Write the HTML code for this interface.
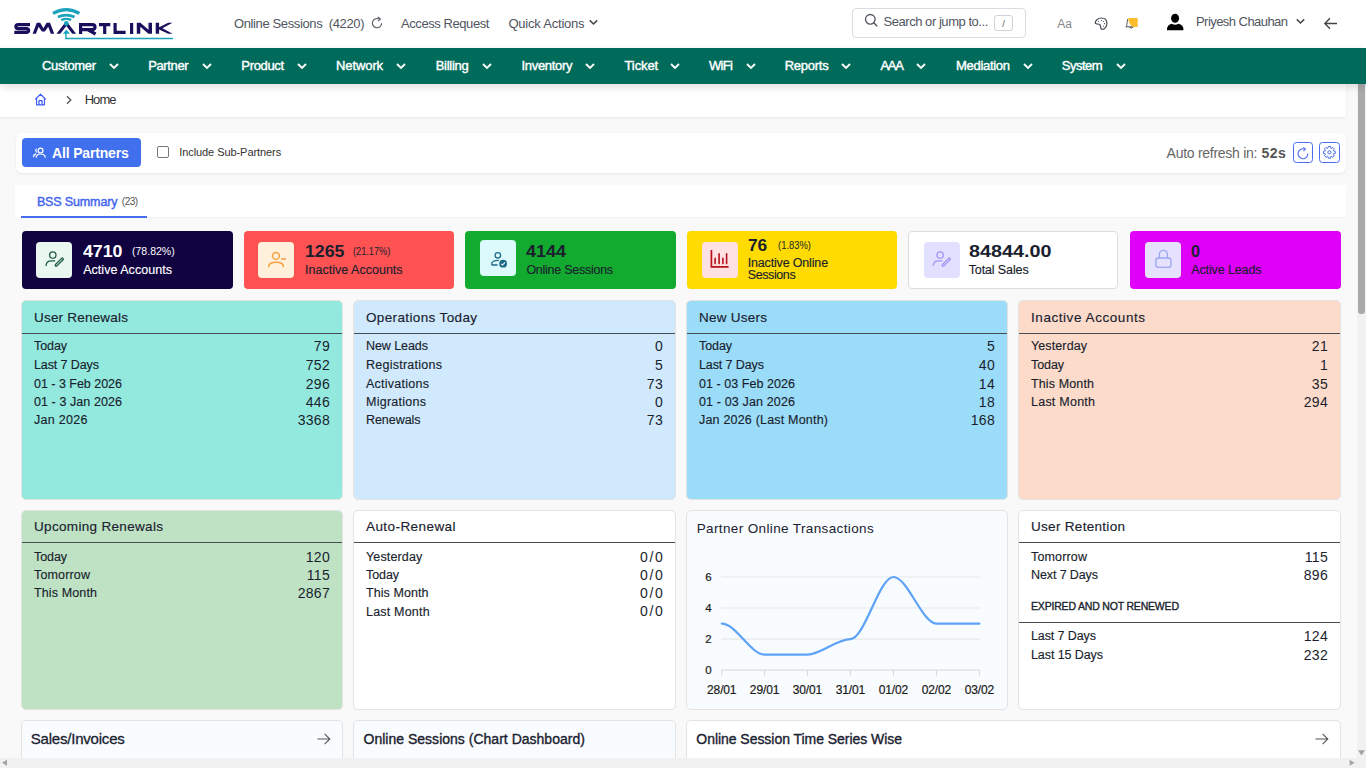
<!DOCTYPE html>
<html><head><meta charset="utf-8">
<style>
*{box-sizing:border-box;margin:0;padding:0}
html,body{width:1366px;height:768px;overflow:hidden;background:#f9f9f9;font-family:"Liberation Sans",sans-serif;color:#222}
.a{position:absolute;white-space:nowrap}
.p{position:absolute;border-radius:5px;border:1px solid #e6e6e6}
.dv{position:absolute;height:1.5px;background:#4a5258}
</style></head>
<body>

<div class="a" style="left:0;top:0;width:1366px;height:48px;background:#fff"></div>
<svg class="a" style="left:0;top:0" width="190" height="48" viewBox="0 0 190 48">
    <g fill="none" stroke="#1a0f5c" stroke-width="3.2" stroke-linejoin="miter" stroke-linecap="butt">
      <path d="M30 24.6 H18.2 Q15.9 24.6 15.9 26.6 Q15.9 28.6 18.2 28.6 H26.3 Q28.6 28.6 28.6 30.6 Q28.6 32.4 26.3 32.4 H14.3"/>
      <path d="M80.6 34 V24.6 H92.4 Q95 24.6 95 27.1 Q95 29.6 92.4 29.6 H82 M87.5 29.6 L95.6 34"/>
      <path d="M99 24.6 H110.3 M104.7 24.6 V34"/>
      <path d="M115.1 23 V32.4 H125.6"/>
      <path d="M131.6 23 V34"/>
    </g>
    <g fill="none" stroke="#1aa3bb" stroke-linecap="butt">
      <path d="M53 13.4 Q66.2 5.9 79.4 13.4" stroke-width="3.3"/>
      <path d="M57.9 17.1 Q66.2 13.1 74.5 17.1" stroke-width="2.8"/>
      <path d="M61.3 20.1 Q66.2 17.7 71.1 20.1" stroke-width="2.4"/>
      <path d="M65.9 31 V38.5 H173" stroke-width="1.4"/>
    </g>
    <g fill="#1a0f5c">
      <path d="M32.6 33.8 L36.8 22.8 H40.2 L43.4 28.2 L46.6 22.8 H50 L54.2 33.8 H50.8 L48.2 26.8 L44.9 31.4 H41.9 L38.6 26.8 L36 33.8 Z"/>
      <path d="M56.5 33.8 L64.6 23.2 H68 L76.1 33.8 H72.3 L66.3 25.9 L60.3 33.8 Z"/>
      <path d="M136.8 33.8 V22.8 H140.4 L148.5 29.8 V22.8 H152 V33.8 H148.5 L140.3 26.8 V33.8 Z"/>
      <path d="M155.7 33.8 V22.8 H159.1 V27.2 L168.2 22.8 H172.5 L162.4 28.3 L172.6 33.8 H168.2 L159.1 29.4 V33.8 Z"/>
    </g>
    <circle cx="66.3" cy="23.4" r="2.4" fill="#1aa3bb"/>
    <path d="M62.9 33.8 L66.4 29.6 L70 33.8 Z" fill="#1aa3bb"/>
  </svg>
<div class="a" style="left:234.00px;top:17.00px;font-size:13px;line-height:13px;color:#50555e;letter-spacing:-0.375px;">Online Sessions&nbsp; (4220)</div>
<svg class="a" style="left:370px;top:16px" width="14" height="14" viewBox="0 0 14 14"><path d="M11.6 7.2 A4.6 4.6 0 1 1 8.8 2.9" fill="none" stroke="#50555e" stroke-width="1.1"/><path d="M7.8 1 L10.4 3 L8 5.2" fill="none" stroke="#50555e" stroke-width="1.1"/></svg>
<div class="a" style="left:401.00px;top:17.00px;font-size:13px;line-height:13px;color:#50555e;letter-spacing:-0.426px;">Access Request</div>
<div class="a" style="left:508.40px;top:17.00px;font-size:13px;line-height:13px;color:#50555e;letter-spacing:-0.213px;">Quick Actions</div>
<svg class="a" style="left:588px;top:18px" width="11" height="9" viewBox="0 0 11 9"><path d="M1.8 2.4 L5.5 6 L9.2 2.4" fill="none" stroke="#444" stroke-width="1.5"/></svg>
<div class="a" style="left:852px;top:8px;width:174px;height:30px;border:1px solid #d8dde4;border-radius:4px;background:#fff"></div>
<svg class="a" style="left:864px;top:13px" width="15" height="15" viewBox="0 0 15 15"><circle cx="6.3" cy="6.3" r="4.8" fill="none" stroke="#50555e" stroke-width="1.3"/><path d="M9.8 9.8 L13.2 13.2" stroke="#50555e" stroke-width="1.4"/></svg>
<div class="a" style="left:883.50px;top:15.00px;font-size:13px;line-height:13px;color:#50555e;letter-spacing:-0.455px;">Search or jump to...</div>
<div class="a" style="left:994px;top:15px;width:19px;height:16px;border:1px solid #cfd3d8;border-radius:3px"></div>
<div class="a" style="left:1002.20px;top:20.00px;font-size:9px;line-height:9px;color:#555;">/</div>
<div class="a" style="left:1057.30px;top:18.00px;font-size:12px;line-height:12px;color:#888;letter-spacing:-0.078px;">Aa</div>
<svg class="a" style="left:1090px;top:12px" width="20" height="22" viewBox="0 0 20 22"><path d="M5.2 11 C5.4 8.4 8 6 11.3 6 C14.6 6 16.9 8.2 16.9 11.6 C16.9 14.6 14.6 17.3 12.4 17.3 C11 17.3 10.6 16.4 10.5 14.2 C10.4 12.6 9 12.1 7.8 12 C6.2 11.9 5.2 11.6 5.2 11 Z" fill="none" stroke="#454b52" stroke-width="1.2" stroke-linejoin="round"/><circle cx="8.5" cy="9.3" r=".6" fill="#454b52"/><circle cx="11.5" cy="8.3" r=".6" fill="#454b52"/><circle cx="13.5" cy="9.5" r=".6" fill="#454b52"/><circle cx="14.5" cy="11.7" r=".6" fill="#454b52"/><circle cx="13.5" cy="14.1" r=".6" fill="#454b52"/></svg>
<svg class="a" style="left:1120px;top:12px" width="22" height="22" viewBox="0 0 22 22"><path d="M7.6 7 C7.4 9 7 12 6.4 14.6 L5.8 14.8 H14.2" fill="none" stroke="#50555e" stroke-width="1"/><path d="M9.4 15 Q11.2 17.4 13 15" fill="none" stroke="#50555e" stroke-width="1"/><path d="M8.2 6 H17.7 V15.1 H13.6 C10.8 14.2 8.6 11 8.2 6 Z" fill="#fbbd2c"/></svg>
<svg class="a" style="left:1166px;top:13px" width="19" height="19" viewBox="0 0 19 19"><ellipse cx="9.1" cy="5.2" rx="4" ry="4.5" fill="#000"/><path d="M0.9 16.4 Q1 12 5.8 10.7 Q9.1 12.6 12.4 10.7 Q17.4 12 17.5 16.4 Q17.5 17.3 16.4 17.3 H2 Q0.9 17.3 0.9 16.4 Z" fill="#000"/></svg>
<div class="a" style="left:1196.00px;top:15.00px;font-size:13px;line-height:13px;color:#50555e;letter-spacing:-0.552px;">Priyesh Chauhan</div>
<svg class="a" style="left:1295px;top:17px" width="11" height="9" viewBox="0 0 11 9"><path d="M1.8 2.4 L5.5 6 L9.2 2.4" fill="none" stroke="#444" stroke-width="1.5"/></svg>
<svg class="a" style="left:1323px;top:17px" width="15" height="13" viewBox="0 0 15 13"><path d="M14 6.5 H2 M7 1.3 L1.8 6.5 L7 11.7" fill="none" stroke="#444" stroke-width="1.4"/></svg>
<div class="a" style="left:0;top:48px;width:1366px;height:36px;background:#006a5b;z-index:3;box-shadow:0 3px 8px rgba(0,0,0,.13)"></div>
<div class="a" style="left:0;top:0;z-index:4">
<div class="a" style="left:42.00px;top:59.00px;font-size:13px;line-height:13px;color:#fff;letter-spacing:-0.336px;-webkit-text-stroke:0.4px #fff;">Customer</div>
<svg class="a" style="left:108.5px;top:62.6px" width="10" height="7" viewBox="0 0 10 7"><path d="M1 1 L5 5 L9 1" fill="none" stroke="#fff" stroke-width="1.8"/></svg>
<div class="a" style="left:148.20px;top:59.00px;font-size:13px;line-height:13px;color:#fff;letter-spacing:-0.372px;-webkit-text-stroke:0.4px #fff;">Partner</div>
<svg class="a" style="left:201.9px;top:62.6px" width="10" height="7" viewBox="0 0 10 7"><path d="M1 1 L5 5 L9 1" fill="none" stroke="#fff" stroke-width="1.8"/></svg>
<div class="a" style="left:241.30px;top:59.00px;font-size:13px;line-height:13px;color:#fff;letter-spacing:-0.334px;-webkit-text-stroke:0.4px #fff;">Product</div>
<svg class="a" style="left:296.5px;top:62.6px" width="10" height="7" viewBox="0 0 10 7"><path d="M1 1 L5 5 L9 1" fill="none" stroke="#fff" stroke-width="1.8"/></svg>
<div class="a" style="left:336.10px;top:59.00px;font-size:13px;line-height:13px;color:#fff;letter-spacing:-0.113px;-webkit-text-stroke:0.4px #fff;">Network</div>
<svg class="a" style="left:396.2px;top:62.6px" width="10" height="7" viewBox="0 0 10 7"><path d="M1 1 L5 5 L9 1" fill="none" stroke="#fff" stroke-width="1.8"/></svg>
<div class="a" style="left:435.70px;top:59.00px;font-size:13px;line-height:13px;color:#fff;letter-spacing:-0.281px;-webkit-text-stroke:0.4px #fff;">Billing</div>
<svg class="a" style="left:482.0px;top:62.6px" width="10" height="7" viewBox="0 0 10 7"><path d="M1 1 L5 5 L9 1" fill="none" stroke="#fff" stroke-width="1.8"/></svg>
<div class="a" style="left:521.50px;top:59.00px;font-size:13px;line-height:13px;color:#fff;letter-spacing:-0.309px;-webkit-text-stroke:0.4px #fff;">Inventory</div>
<svg class="a" style="left:584.5px;top:62.6px" width="10" height="7" viewBox="0 0 10 7"><path d="M1 1 L5 5 L9 1" fill="none" stroke="#fff" stroke-width="1.8"/></svg>
<div class="a" style="left:624.50px;top:59.00px;font-size:13px;line-height:13px;color:#fff;letter-spacing:-0.098px;-webkit-text-stroke:0.4px #fff;">Ticket</div>
<svg class="a" style="left:670.3px;top:62.6px" width="10" height="7" viewBox="0 0 10 7"><path d="M1 1 L5 5 L9 1" fill="none" stroke="#fff" stroke-width="1.8"/></svg>
<div class="a" style="left:709.00px;top:59.00px;font-size:13px;line-height:13px;color:#fff;letter-spacing:-0.663px;-webkit-text-stroke:0.4px #fff;">WiFi</div>
<svg class="a" style="left:745.5px;top:62.6px" width="10" height="7" viewBox="0 0 10 7"><path d="M1 1 L5 5 L9 1" fill="none" stroke="#fff" stroke-width="1.8"/></svg>
<div class="a" style="left:784.70px;top:59.00px;font-size:13px;line-height:13px;color:#fff;letter-spacing:-0.253px;-webkit-text-stroke:0.4px #fff;">Reports</div>
<svg class="a" style="left:841.2px;top:62.6px" width="10" height="7" viewBox="0 0 10 7"><path d="M1 1 L5 5 L9 1" fill="none" stroke="#fff" stroke-width="1.8"/></svg>
<div class="a" style="left:880.40px;top:59.00px;font-size:13px;line-height:13px;color:#fff;letter-spacing:-1.257px;-webkit-text-stroke:0.4px #fff;">AAA</div>
<svg class="a" style="left:916.0px;top:62.6px" width="10" height="7" viewBox="0 0 10 7"><path d="M1 1 L5 5 L9 1" fill="none" stroke="#fff" stroke-width="1.8"/></svg>
<div class="a" style="left:956.00px;top:59.00px;font-size:13px;line-height:13px;color:#fff;letter-spacing:-0.296px;-webkit-text-stroke:0.4px #fff;">Mediation</div>
<svg class="a" style="left:1022.5px;top:62.6px" width="10" height="7" viewBox="0 0 10 7"><path d="M1 1 L5 5 L9 1" fill="none" stroke="#fff" stroke-width="1.8"/></svg>
<div class="a" style="left:1061.70px;top:59.00px;font-size:13px;line-height:13px;color:#fff;letter-spacing:-0.469px;-webkit-text-stroke:0.4px #fff;">System</div>
<svg class="a" style="left:1115.5px;top:62.6px" width="10" height="7" viewBox="0 0 10 7"><path d="M1 1 L5 5 L9 1" fill="none" stroke="#fff" stroke-width="1.8"/></svg>
</div>
<div class="a" style="left:0;top:84px;width:1346px;height:33px;background:#fff;box-shadow:0 1px 2px rgba(0,0,0,.07)"></div>
<svg class="a" style="left:34px;top:93px" width="13" height="13" viewBox="0 0 13 13"><path d="M1.2 6.4 L6.5 1.2 L11.8 6.4 M2.6 5.2 V11.8 H10.4 V5.2 M5 11.8 V7.6 H8 V11.8" fill="none" stroke="#3d5cf5" stroke-width="1.2" stroke-linejoin="round"/></svg>
<svg class="a" style="left:65px;top:95px" width="8" height="10" viewBox="0 0 8 10"><path d="M2 1.2 L5.8 5 L2 8.8" fill="none" stroke="#555" stroke-width="1.3"/></svg>
<div class="a" style="left:84.70px;top:93.00px;font-size:13px;line-height:13px;color:#333;letter-spacing:-0.960px;">Home</div>
<div class="a" style="left:16px;top:132.5px;width:1330px;height:40.5px;background:#fff;border-radius:6px;box-shadow:0 1px 3px rgba(0,0,0,.07)"></div>
<div class="a" style="left:22px;top:137.5px;width:118.5px;height:29.7px;background:#4170ee;border-radius:4px"></div>
<svg class="a" style="left:32px;top:147px" width="16" height="12" viewBox="0 0 16 12"><circle cx="8.6" cy="3.6" r="2.4" fill="none" stroke="#fff" stroke-width="1.2"/><path d="M4.2 10.6 Q4.4 7 8.6 7 Q12.8 7 13.4 10.6" fill="none" stroke="#fff" stroke-width="1.2"/><path d="M5.4 5.4 A2 2 0 0 1 4.6 1.8 M1.4 10.2 Q1.6 7.4 4 6.8" fill="none" stroke="#fff" stroke-width="1.2"/></svg>
<div class="a" style="left:52.00px;top:146.00px;font-size:14px;line-height:14px;color:#fff;font-weight:bold;letter-spacing:-0.162px;">All Partners</div>
<div class="a" style="left:156.7px;top:146.1px;width:12px;height:12px;border:1.3px solid #777;border-radius:2px;background:#fff"></div>
<div class="a" style="left:179.20px;top:147.00px;font-size:11px;line-height:11px;color:#333;letter-spacing:-0.070px;">Include Sub-Partners</div>
<div class="a" style="left:1166.60px;top:146.00px;font-size:14px;line-height:14px;color:#666;letter-spacing:-0.276px;">Auto refresh in:</div>
<div class="a" style="left:1261.50px;top:146.00px;font-size:14px;line-height:14px;color:#555;font-weight:bold;letter-spacing:0.420px;">52s</div>
<div class="a" style="left:1292.6px;top:142px;width:20.4px;height:20.8px;border:1px solid #4a6cf0;border-radius:3.5px;background:#fff"></div>
<svg class="a" style="left:1292.6px;top:142px" width="21" height="21" viewBox="0 0 21 21"><path d="M14.9 11.6 A4.95 4.95 0 1 1 11.6 7.1" fill="none" stroke="#4a6cf0" stroke-width="1.1"/><path d="M10.3 5.3 L12.4 7.1 L10.5 9" fill="none" stroke="#4a6cf0" stroke-width="1.1"/></svg>
<div class="a" style="left:1319px;top:142px;width:21px;height:20.8px;border:1px solid #4a6cf0;border-radius:3.5px;background:#fff"></div>
<svg class="a" style="left:1319.2px;top:142.4px" width="21" height="21" viewBox="0 0 21 21"><path d="M8.89 6.33 L9.38 4.44 L11.42 4.44 L11.91 6.33 L12.17 6.43 L13.86 5.45 L15.30 6.89 L14.32 8.58 L14.42 8.84 L16.31 9.33 L16.31 11.37 L14.42 11.86 L14.32 12.12 L15.30 13.81 L13.86 15.25 L12.17 14.27 L11.91 14.37 L11.42 16.26 L9.38 16.26 L8.89 14.37 L8.63 14.27 L6.94 15.25 L5.50 13.81 L6.48 12.12 L6.38 11.86 L4.49 11.37 L4.49 9.33 L6.38 8.84 L6.48 8.58 L5.50 6.89 L6.94 5.45 L8.63 6.43 Z" fill="none" stroke="#4a6cf0" stroke-width="1" stroke-linejoin="round"/><circle cx="10.4" cy="10.35" r="1.6" fill="none" stroke="#4a6cf0" stroke-width="1"/></svg>
<div class="a" style="left:15px;top:185.3px;width:1331px;height:31.9px;background:#fff"></div>
<div class="a" style="left:36.90px;top:196.00px;font-size:12.5px;line-height:12.5px;color:#4466ee;letter-spacing:-0.137px;-webkit-text-stroke:0.45px #4466ee;">BSS Summary</div>
<div class="a" style="left:121.80px;top:197.00px;font-size:10px;line-height:10px;color:#555;letter-spacing:-0.461px;">(23)</div>
<div class="a" style="left:147px;top:217px;width:1199px;height:1px;background:#efefef"></div>
<div class="a" style="left:21px;top:215.8px;width:126px;height:2.2px;background:#4a6cf0"></div>
<div class="a" style="left:22px;top:231px;width:210.5px;height:58px;background:#10033f;border-radius:4px;"></div>
<div class="a" style="left:36.2px;top:242px;width:36px;height:36px;background:#e9f7ef;border-radius:4px"></div>
<svg class="a" style="left:36.2px;top:242px" width="36" height="36" viewBox="0 0 36 36"><circle cx="16.8" cy="13.1" r="3.2" fill="none" stroke="#1f5a45" stroke-width="1.3"/><path d="M10.1 23.5 Q10.3 18.9 15.5 18.9 H18.6" fill="none" stroke="#1f5a45" stroke-width="1.3" stroke-linecap="round"/><path d="M20.2 23.2 L26.3 17.1" stroke="#1f5a45" stroke-width="3.3" stroke-linecap="round"/><path d="M20.4 23 L26.1 17.3" stroke="#e9f7ef" stroke-width="1" stroke-linecap="round"/></svg>
<div class="a" style="left:83.20px;top:243.00px;font-size:17px;line-height:17px;color:#fff;font-weight:bold;transform:scaleX(1.0444);transform-origin:0 0;">4710</div>
<div class="a" style="left:131.50px;top:246.00px;font-size:11px;line-height:11px;color:#fff;transform:scaleX(0.9566);transform-origin:0 0;">(78.82%)</div>
<div class="a" style="left:83.20px;top:264.00px;font-size:12.5px;line-height:12.5px;color:#fff;letter-spacing:0.033px;-webkit-text-stroke:0.15px #fff;">Active Accounts</div>
<div class="a" style="left:243.8px;top:231px;width:210.5px;height:58px;background:#ff5252;border-radius:4px;"></div>
<div class="a" style="left:258.1px;top:242px;width:36px;height:36px;background:#fff0dc;border-radius:4px"></div>
<svg class="a" style="left:258.1px;top:242px" width="36" height="36" viewBox="0 0 36 36"><circle cx="17.9" cy="13.9" r="3.4" fill="none" stroke="#f5a445" stroke-width="1.6"/><path d="M10.7 24.6 Q11 20.3 18.1 20.3 Q25.2 20.3 25.5 24.6" fill="none" stroke="#f5a445" stroke-width="1.6" stroke-linecap="round"/><path d="M23.2 17 H27.9" stroke="#f5a445" stroke-width="1.6"/></svg>
<div class="a" style="left:305.00px;top:243.00px;font-size:17px;line-height:17px;color:#1a1f2e;font-weight:bold;transform:scaleX(1.0418);transform-origin:0 0;">1265</div>
<div class="a" style="left:353.30px;top:246.00px;font-size:11px;line-height:11px;color:#1a1f2e;transform:scaleX(0.8334);transform-origin:0 0;">(21.17%)</div>
<div class="a" style="left:305.00px;top:264.00px;font-size:12.5px;line-height:12.5px;color:#1a1f2e;letter-spacing:0.020px;-webkit-text-stroke:0.15px #1a1f2e;">Inactive Accounts</div>
<div class="a" style="left:465.2px;top:231px;width:210.5px;height:58px;background:#12ab2f;border-radius:4px;"></div>
<div class="a" style="left:480.2px;top:240.1px;width:36px;height:36px;background:#dcfafc;border-radius:4px"></div>
<svg class="a" style="left:480.2px;top:240.1px" width="36" height="36" viewBox="0 0 36 36"><circle cx="17.85" cy="15.3" r="2.75" fill="none" stroke="#1d6a88" stroke-width="1.3"/><path d="M18.8 20.4 Q11.6 20.3 11.6 24.2 Q11.6 25 12.6 25 H17.6" fill="none" stroke="#1d6a88" stroke-width="1.3" stroke-linejoin="round"/><circle cx="23.1" cy="23.7" r="3.9" fill="#1d6a88"/><path d="M21.3 23.8 L22.6 25 L24.9 22.4" fill="none" stroke="#fff" stroke-width="1.1"/></svg>
<div class="a" style="left:526.40px;top:243.00px;font-size:17px;line-height:17px;color:#1a1f2e;font-weight:bold;transform:scaleX(1.0577);transform-origin:0 0;">4144</div>
<div class="a" style="left:526.40px;top:264.00px;font-size:12.5px;line-height:12.5px;color:#1a1f2e;letter-spacing:-0.259px;-webkit-text-stroke:0.15px #1a1f2e;">Online Sessions</div>
<div class="a" style="left:686.5px;top:231px;width:210.5px;height:58px;background:#ffdb00;border-radius:4px;"></div>
<div class="a" style="left:702.2px;top:242.1px;width:36px;height:36px;background:#ffe1e3;border-radius:4px"></div>
<svg class="a" style="left:702.2px;top:242.1px" width="36" height="36" viewBox="0 0 36 36"><path d="M9.4 8.1 V24.8 H26.6" fill="none" stroke="#b5121b" stroke-width="1.7"/><path d="M13.1 16.4 V21.6 M17.1 11.9 V21.6 M20.9 16.4 V21.6 M24.6 11.9 V21.6" fill="none" stroke="#b5121b" stroke-width="1.6" stroke-linecap="round"/></svg>
<div class="a" style="left:747.70px;top:237.00px;font-size:17px;line-height:17px;color:#1a1f2e;font-weight:bold;transform:scaleX(1.0153);transform-origin:0 0;">76</div>
<div class="a" style="left:778.00px;top:240.00px;font-size:11px;line-height:11px;color:#1a1f2e;transform:scaleX(0.8568);transform-origin:0 0;">(1.83%)</div>
<div class="a" style="left:747.70px;top:257.00px;font-size:12.5px;line-height:12.5px;color:#1a1f2e;letter-spacing:-0.163px;-webkit-text-stroke:0.15px #1a1f2e;">Inactive Online</div>
<div class="a" style="left:747.70px;top:269.00px;font-size:12.5px;line-height:12.5px;color:#1a1f2e;letter-spacing:-0.389px;-webkit-text-stroke:0.15px #1a1f2e;">Sessions</div>
<div class="a" style="left:907.5px;top:231px;width:210.5px;height:58px;background:#fff;border-radius:4px;border:1px solid #dcdcdc;"></div>
<div class="a" style="left:924px;top:242px;width:36px;height:36px;background:#e1e0ff;border-radius:4px"></div>
<svg class="a" style="left:924px;top:242px" width="36" height="36" viewBox="0 0 36 36"><circle cx="16.2" cy="13.1" r="3.2" fill="none" stroke="#a197f3" stroke-width="1.3"/><path d="M9.3 23.3 Q9.5 18.8 14.8 18.8 H17.8" fill="none" stroke="#a197f3" stroke-width="1.3" stroke-linecap="round"/><path d="M19.2 23.2 L25.3 17.1" stroke="#a197f3" stroke-width="3.3" stroke-linecap="round"/><path d="M19.4 23 L25.1 17.3" stroke="#e1e0ff" stroke-width="1" stroke-linecap="round"/></svg>
<div class="a" style="left:968.70px;top:243.00px;font-size:17px;line-height:17px;color:#1a1f2e;font-weight:bold;transform:scaleX(1.1635);transform-origin:0 0;">84844.00</div>
<div class="a" style="left:968.70px;top:264.00px;font-size:12.5px;line-height:12.5px;color:#1a1f2e;letter-spacing:-0.115px;-webkit-text-stroke:0.15px #1a1f2e;">Total Sales</div>
<div class="a" style="left:1130px;top:231px;width:210.5px;height:58px;background:#df00fa;border-radius:4px;"></div>
<div class="a" style="left:1144.9px;top:242px;width:36px;height:36px;background:#e5e1ff;border-radius:4px"></div>
<svg class="a" style="left:1144.9px;top:242px" width="36" height="36" viewBox="0 0 36 36"><path d="M14.4 16 V12.4 A4 4 0 0 1 22.4 12.4 V16" fill="none" stroke="#9ca6f2" stroke-width="1.3"/><rect x="10.9" y="16" width="15.1" height="9.3" rx="2.4" fill="none" stroke="#9ca6f2" stroke-width="1.3"/></svg>
<div class="a" style="left:1191.20px;top:243.00px;font-size:17px;line-height:17px;color:#1a1f2e;font-weight:bold;transform:scaleX(0.9519);transform-origin:0 0;">0</div>
<div class="a" style="left:1191.20px;top:264.00px;font-size:12.5px;line-height:12.5px;color:#1a1f2e;letter-spacing:-0.116px;-webkit-text-stroke:0.15px #1a1f2e;">Active Leads</div>
<div class="a" style="left:21px;top:300px;width:322px;height:200px;background:#93e9de;border:1px solid #e3e3e3;border-radius:5px"></div>
<div class="a" style="left:34.00px;top:311.00px;font-size:13.5px;line-height:13.5px;color:#1a2130;letter-spacing:0.205px;-webkit-text-stroke:0.15px #1a2130;">User Renewals</div>
<div class="a" style="left:22px;top:333.29999999999995px;width:320px;height:1.2px;background:#454c54"></div>
<div class="a" style="left:34.00px;top:340.00px;font-size:12.5px;line-height:12.5px;color:#1a1f2e;letter-spacing:-0.089px;-webkit-text-stroke:0.15px #1a1f2e;">Today</div>
<div class="a" style="left:313.83px;top:339.00px;font-size:14px;line-height:14px;color:#1a1f2e;letter-spacing:0.300px;">79</div>
<div class="a" style="left:34.00px;top:359.00px;font-size:12.5px;line-height:12.5px;color:#1a1f2e;letter-spacing:-0.100px;-webkit-text-stroke:0.15px #1a1f2e;">Last 7 Days</div>
<div class="a" style="left:305.74px;top:358.00px;font-size:14px;line-height:14px;color:#1a1f2e;letter-spacing:0.300px;">752</div>
<div class="a" style="left:34.00px;top:378.00px;font-size:12.5px;line-height:12.5px;color:#1a1f2e;letter-spacing:-0.018px;-webkit-text-stroke:0.15px #1a1f2e;">01 - 3 Feb 2026</div>
<div class="a" style="left:305.74px;top:377.00px;font-size:14px;line-height:14px;color:#1a1f2e;letter-spacing:0.300px;">296</div>
<div class="a" style="left:34.00px;top:396.00px;font-size:12.5px;line-height:12.5px;color:#1a1f2e;letter-spacing:0.080px;-webkit-text-stroke:0.15px #1a1f2e;">01 - 3 Jan 2026</div>
<div class="a" style="left:305.74px;top:395.00px;font-size:14px;line-height:14px;color:#1a1f2e;letter-spacing:0.300px;">446</div>
<div class="a" style="left:34.00px;top:414.00px;font-size:12.5px;line-height:12.5px;color:#1a1f2e;letter-spacing:0.295px;-webkit-text-stroke:0.15px #1a1f2e;">Jan 2026</div>
<div class="a" style="left:297.65px;top:413.00px;font-size:14px;line-height:14px;color:#1a1f2e;letter-spacing:0.300px;">3368</div>
<div class="a" style="left:353px;top:300px;width:323px;height:200px;background:#d0e9fd;border:1px solid #e3e3e3;border-radius:5px"></div>
<div class="a" style="left:366.00px;top:311.00px;font-size:13.5px;line-height:13.5px;color:#1a2130;letter-spacing:0.362px;-webkit-text-stroke:0.15px #1a2130;">Operations Today</div>
<div class="a" style="left:354px;top:333.29999999999995px;width:321px;height:1.2px;background:#454c54"></div>
<div class="a" style="left:366.00px;top:340.00px;font-size:12.5px;line-height:12.5px;color:#1a1f2e;letter-spacing:-0.067px;-webkit-text-stroke:0.15px #1a1f2e;">New Leads</div>
<div class="a" style="left:654.91px;top:339.00px;font-size:14px;line-height:14px;color:#1a1f2e;letter-spacing:0.300px;">0</div>
<div class="a" style="left:366.00px;top:359.00px;font-size:12.5px;line-height:12.5px;color:#1a1f2e;letter-spacing:0.254px;-webkit-text-stroke:0.15px #1a1f2e;">Registrations</div>
<div class="a" style="left:654.91px;top:358.00px;font-size:14px;line-height:14px;color:#1a1f2e;letter-spacing:0.300px;">5</div>
<div class="a" style="left:366.00px;top:378.00px;font-size:12.5px;line-height:12.5px;color:#1a1f2e;letter-spacing:0.256px;-webkit-text-stroke:0.15px #1a1f2e;">Activations</div>
<div class="a" style="left:646.83px;top:377.00px;font-size:14px;line-height:14px;color:#1a1f2e;letter-spacing:0.300px;">73</div>
<div class="a" style="left:366.00px;top:396.00px;font-size:12.5px;line-height:12.5px;color:#1a1f2e;letter-spacing:0.260px;-webkit-text-stroke:0.15px #1a1f2e;">Migrations</div>
<div class="a" style="left:654.91px;top:395.00px;font-size:14px;line-height:14px;color:#1a1f2e;letter-spacing:0.300px;">0</div>
<div class="a" style="left:366.00px;top:414.00px;font-size:12.5px;line-height:12.5px;color:#1a1f2e;letter-spacing:-0.056px;-webkit-text-stroke:0.15px #1a1f2e;">Renewals</div>
<div class="a" style="left:646.83px;top:413.00px;font-size:14px;line-height:14px;color:#1a1f2e;letter-spacing:0.300px;">73</div>
<div class="a" style="left:686px;top:300px;width:322px;height:200px;background:#9bdcf9;border:1px solid #e3e3e3;border-radius:5px"></div>
<div class="a" style="left:699.00px;top:311.00px;font-size:13.5px;line-height:13.5px;color:#1a2130;letter-spacing:0.249px;-webkit-text-stroke:0.15px #1a2130;">New Users</div>
<div class="a" style="left:687px;top:333.29999999999995px;width:320px;height:1.2px;background:#454c54"></div>
<div class="a" style="left:699.00px;top:340.00px;font-size:12.5px;line-height:12.5px;color:#1a1f2e;letter-spacing:-0.089px;-webkit-text-stroke:0.15px #1a1f2e;">Today</div>
<div class="a" style="left:986.91px;top:339.00px;font-size:14px;line-height:14px;color:#1a1f2e;letter-spacing:0.300px;">5</div>
<div class="a" style="left:699.00px;top:359.00px;font-size:12.5px;line-height:12.5px;color:#1a1f2e;letter-spacing:-0.100px;-webkit-text-stroke:0.15px #1a1f2e;">Last 7 Days</div>
<div class="a" style="left:978.83px;top:358.00px;font-size:14px;line-height:14px;color:#1a1f2e;letter-spacing:0.300px;">40</div>
<div class="a" style="left:699.00px;top:378.00px;font-size:12.5px;line-height:12.5px;color:#1a1f2e;letter-spacing:0.053px;-webkit-text-stroke:0.15px #1a1f2e;">01 - 03 Feb 2026</div>
<div class="a" style="left:978.83px;top:377.00px;font-size:14px;line-height:14px;color:#1a1f2e;letter-spacing:0.300px;">14</div>
<div class="a" style="left:699.00px;top:396.00px;font-size:12.5px;line-height:12.5px;color:#1a1f2e;letter-spacing:0.145px;-webkit-text-stroke:0.15px #1a1f2e;">01 - 03 Jan 2026</div>
<div class="a" style="left:978.83px;top:395.00px;font-size:14px;line-height:14px;color:#1a1f2e;letter-spacing:0.300px;">18</div>
<div class="a" style="left:699.00px;top:414.00px;font-size:12.5px;line-height:12.5px;color:#1a1f2e;letter-spacing:0.196px;-webkit-text-stroke:0.15px #1a1f2e;">Jan 2026 (Last Month)</div>
<div class="a" style="left:970.74px;top:413.00px;font-size:14px;line-height:14px;color:#1a1f2e;letter-spacing:0.300px;">168</div>
<div class="a" style="left:1018px;top:300px;width:323px;height:200px;background:#fddbca;border:1px solid #e3e3e3;border-radius:5px"></div>
<div class="a" style="left:1031.00px;top:311.00px;font-size:13.5px;line-height:13.5px;color:#1a2130;letter-spacing:0.559px;-webkit-text-stroke:0.15px #1a2130;">Inactive Accounts</div>
<div class="a" style="left:1019px;top:333.29999999999995px;width:321px;height:1.2px;background:#454c54"></div>
<div class="a" style="left:1031.00px;top:340.00px;font-size:12.5px;line-height:12.5px;color:#1a1f2e;letter-spacing:0.108px;-webkit-text-stroke:0.15px #1a1f2e;">Yesterday</div>
<div class="a" style="left:1311.83px;top:339.00px;font-size:14px;line-height:14px;color:#1a1f2e;letter-spacing:0.300px;">21</div>
<div class="a" style="left:1031.00px;top:359.00px;font-size:12.5px;line-height:12.5px;color:#1a1f2e;letter-spacing:-0.089px;-webkit-text-stroke:0.15px #1a1f2e;">Today</div>
<div class="a" style="left:1319.91px;top:358.00px;font-size:14px;line-height:14px;color:#1a1f2e;letter-spacing:0.300px;">1</div>
<div class="a" style="left:1031.00px;top:378.00px;font-size:12.5px;line-height:12.5px;color:#1a1f2e;letter-spacing:0.130px;-webkit-text-stroke:0.15px #1a1f2e;">This Month</div>
<div class="a" style="left:1311.83px;top:377.00px;font-size:14px;line-height:14px;color:#1a1f2e;letter-spacing:0.300px;">35</div>
<div class="a" style="left:1031.00px;top:396.00px;font-size:12.5px;line-height:12.5px;color:#1a1f2e;letter-spacing:0.240px;-webkit-text-stroke:0.15px #1a1f2e;">Last Month</div>
<div class="a" style="left:1303.74px;top:395.00px;font-size:14px;line-height:14px;color:#1a1f2e;letter-spacing:0.300px;">294</div>
<div class="a" style="left:21px;top:510px;width:322px;height:200px;background:#bee2c3;border:1px solid #e3e3e3;border-radius:5px"></div>
<div class="a" style="left:34.00px;top:520.00px;font-size:13.5px;line-height:13.5px;color:#1a2130;letter-spacing:0.324px;-webkit-text-stroke:0.15px #1a2130;">Upcoming Renewals</div>
<div class="a" style="left:22px;top:542.0px;width:320px;height:1.2px;background:#454c54"></div>
<div class="a" style="left:34.00px;top:551.00px;font-size:12.5px;line-height:12.5px;color:#1a1f2e;letter-spacing:-0.089px;-webkit-text-stroke:0.15px #1a1f2e;">Today</div>
<div class="a" style="left:305.74px;top:550.00px;font-size:14px;line-height:14px;color:#1a1f2e;letter-spacing:0.300px;">120</div>
<div class="a" style="left:34.00px;top:569.00px;font-size:12.5px;line-height:12.5px;color:#1a1f2e;letter-spacing:0.161px;-webkit-text-stroke:0.15px #1a1f2e;">Tomorrow</div>
<div class="a" style="left:306.78px;top:568.00px;font-size:14px;line-height:14px;color:#1a1f2e;letter-spacing:0.300px;">115</div>
<div class="a" style="left:34.00px;top:587.00px;font-size:12.5px;line-height:12.5px;color:#1a1f2e;letter-spacing:0.130px;-webkit-text-stroke:0.15px #1a1f2e;">This Month</div>
<div class="a" style="left:297.65px;top:586.00px;font-size:14px;line-height:14px;color:#1a1f2e;letter-spacing:0.300px;">2867</div>
<div class="a" style="left:353px;top:510px;width:323px;height:200px;background:#fff;border:1px solid #e3e3e3;border-radius:5px"></div>
<div class="a" style="left:366.00px;top:520.00px;font-size:13.5px;line-height:13.5px;color:#1a2130;letter-spacing:0.427px;-webkit-text-stroke:0.15px #1a2130;">Auto-Renewal</div>
<div class="a" style="left:354px;top:542.0px;width:321px;height:1.2px;background:#454c54"></div>
<div class="a" style="left:366.00px;top:551.00px;font-size:12.5px;line-height:12.5px;color:#1a1f2e;letter-spacing:0.146px;-webkit-text-stroke:0.15px #1a1f2e;">Yesterday</div>
<div class="a" style="left:640.04px;top:550.00px;font-size:14px;line-height:14px;color:#1a1f2e;letter-spacing:1.600px;">0/0</div>
<div class="a" style="left:366.00px;top:569.00px;font-size:12.5px;line-height:12.5px;color:#1a1f2e;letter-spacing:-0.089px;-webkit-text-stroke:0.15px #1a1f2e;">Today</div>
<div class="a" style="left:640.04px;top:568.00px;font-size:14px;line-height:14px;color:#1a1f2e;letter-spacing:1.600px;">0/0</div>
<div class="a" style="left:366.00px;top:587.00px;font-size:12.5px;line-height:12.5px;color:#1a1f2e;letter-spacing:0.074px;-webkit-text-stroke:0.15px #1a1f2e;">This Month</div>
<div class="a" style="left:640.04px;top:586.00px;font-size:14px;line-height:14px;color:#1a1f2e;letter-spacing:1.600px;">0/0</div>
<div class="a" style="left:366.00px;top:606.00px;font-size:12.5px;line-height:12.5px;color:#1a1f2e;letter-spacing:0.195px;-webkit-text-stroke:0.15px #1a1f2e;">Last Month</div>
<div class="a" style="left:640.04px;top:604.00px;font-size:14px;line-height:14px;color:#1a1f2e;letter-spacing:1.600px;">0/0</div>
<div class="a" style="left:1018px;top:510px;width:323px;height:200px;background:#fff;border:1px solid #e3e3e3;border-radius:5px"></div>
<div class="a" style="left:1031.00px;top:520.00px;font-size:13.5px;line-height:13.5px;color:#1a2130;letter-spacing:0.304px;-webkit-text-stroke:0.15px #1a2130;">User Retention</div>
<div class="a" style="left:1019px;top:542.1999999999999px;width:321px;height:1.2px;background:#454c54"></div>
<div class="a" style="left:1031.00px;top:551.00px;font-size:12.5px;line-height:12.5px;color:#1a1f2e;letter-spacing:0.161px;-webkit-text-stroke:0.15px #1a1f2e;">Tomorrow</div>
<div class="a" style="left:1304.78px;top:550.00px;font-size:14px;line-height:14px;color:#1a1f2e;letter-spacing:0.300px;">115</div>
<div class="a" style="left:1031.00px;top:569.00px;font-size:12.5px;line-height:12.5px;color:#1a1f2e;letter-spacing:-0.108px;-webkit-text-stroke:0.15px #1a1f2e;">Next 7 Days</div>
<div class="a" style="left:1303.74px;top:568.00px;font-size:14px;line-height:14px;color:#1a1f2e;letter-spacing:0.300px;">896</div>
<div class="a" style="left:1031.00px;top:630.00px;font-size:12.5px;line-height:12.5px;color:#1a1f2e;letter-spacing:-0.100px;-webkit-text-stroke:0.15px #1a1f2e;">Last 7 Days</div>
<div class="a" style="left:1303.74px;top:629.00px;font-size:14px;line-height:14px;color:#1a1f2e;letter-spacing:0.300px;">124</div>
<div class="a" style="left:1031.00px;top:649.00px;font-size:12.5px;line-height:12.5px;color:#1a1f2e;letter-spacing:-0.087px;-webkit-text-stroke:0.15px #1a1f2e;">Last 15 Days</div>
<div class="a" style="left:1303.74px;top:648.00px;font-size:14px;line-height:14px;color:#1a1f2e;letter-spacing:0.300px;">232</div>
<div class="a" style="left:1031.00px;top:601.00px;font-size:10.5px;line-height:10.5px;color:#1a1f2e;letter-spacing:-0.186px;-webkit-text-stroke:0.35px #1a1f2e;">EXPIRED AND NOT RENEWED</div>
<div class="a" style="left:1019px;top:621.6999999999999px;width:321px;height:1.2px;background:#454c54"></div>
<div class="a" style="left:686px;top:510px;width:322px;height:200px;background:#f9fcfe;border:1px solid #e3e3e3;border-radius:5px"></div>
<div class="a" style="left:696.70px;top:522.00px;font-size:13.5px;line-height:13.5px;color:#1a2130;letter-spacing:0.372px;">Partner Online Transactions</div>
<svg class="a" style="left:0;top:0" width="1366" height="768" viewBox="0 0 1366 768"><path d="M721 639.1 H980" stroke="#e6e8ea" stroke-width="1.2"/><path d="M721 608.0 H980" stroke="#e6e8ea" stroke-width="1.2"/><path d="M721 577.0 H980" stroke="#e6e8ea" stroke-width="1.2"/><path d="M721 670.1 H980" stroke="#d4d6d8" stroke-width="1"/><path d="M721.8 670.1 V675.6" stroke="#d4d6d8" stroke-width="1"/><path d="M764.6 670.1 V675.6" stroke="#d4d6d8" stroke-width="1"/><path d="M807.4 670.1 V675.6" stroke="#d4d6d8" stroke-width="1"/><path d="M850.4 670.1 V675.6" stroke="#d4d6d8" stroke-width="1"/><path d="M893.4 670.1 V675.6" stroke="#d4d6d8" stroke-width="1"/><path d="M936.4 670.1 V675.6" stroke="#d4d6d8" stroke-width="1"/><path d="M979.4 670.1 V675.6" stroke="#d4d6d8" stroke-width="1"/><path d="M721.80 623.54 C735.92 623.54 750.48 654.58 764.60 654.58 C778.72 654.58 793.28 654.58 807.40 654.58 C821.59 654.58 836.21 639.06 850.40 639.06 C864.59 639.06 879.21 576.98 893.40 576.98 C907.59 576.98 922.21 623.54 936.40 623.54 C950.59 623.54 965.21 623.54 979.40 623.54" fill="none" stroke="#5ea3f7" stroke-width="2.2" stroke-linecap="round"/></svg>
<div class="a" style="left:705.20px;top:665.00px;font-size:11.5px;line-height:11.5px;color:#1a1a1a;-webkit-text-stroke:0.2px #1a1a1a;">0</div>
<div class="a" style="left:705.20px;top:634.00px;font-size:11.5px;line-height:11.5px;color:#1a1a1a;-webkit-text-stroke:0.2px #1a1a1a;">2</div>
<div class="a" style="left:705.20px;top:603.00px;font-size:11.5px;line-height:11.5px;color:#1a1a1a;-webkit-text-stroke:0.2px #1a1a1a;">4</div>
<div class="a" style="left:705.20px;top:572.00px;font-size:11.5px;line-height:11.5px;color:#1a1a1a;-webkit-text-stroke:0.2px #1a1a1a;">6</div>
<div class="a" style="left:707.05px;top:684.00px;font-size:12px;line-height:12px;color:#1a1a1a;letter-spacing:-0.133px;-webkit-text-stroke:0.2px #1a1a1a;">28/01</div>
<div class="a" style="left:749.85px;top:684.00px;font-size:12px;line-height:12px;color:#1a1a1a;letter-spacing:-0.133px;-webkit-text-stroke:0.2px #1a1a1a;">29/01</div>
<div class="a" style="left:792.65px;top:684.00px;font-size:12px;line-height:12px;color:#1a1a1a;letter-spacing:-0.133px;-webkit-text-stroke:0.2px #1a1a1a;">30/01</div>
<div class="a" style="left:835.65px;top:684.00px;font-size:12px;line-height:12px;color:#1a1a1a;letter-spacing:-0.133px;-webkit-text-stroke:0.2px #1a1a1a;">31/01</div>
<div class="a" style="left:878.65px;top:684.00px;font-size:12px;line-height:12px;color:#1a1a1a;letter-spacing:-0.133px;-webkit-text-stroke:0.2px #1a1a1a;">01/02</div>
<div class="a" style="left:921.65px;top:684.00px;font-size:12px;line-height:12px;color:#1a1a1a;letter-spacing:-0.133px;-webkit-text-stroke:0.2px #1a1a1a;">02/02</div>
<div class="a" style="left:964.65px;top:684.00px;font-size:12px;line-height:12px;color:#1a1a1a;letter-spacing:-0.133px;-webkit-text-stroke:0.2px #1a1a1a;">03/02</div>
<div class="a" style="left:21px;top:720px;width:322px;height:60px;background:#f9fcfe;border:1px solid #e3e3e3;border-radius:5px"></div>
<div class="a" style="left:30.80px;top:731.00px;font-size:15px;line-height:15px;color:#1a2130;letter-spacing:-0.209px;-webkit-text-stroke:0.3px #1a2130;">Sales/Invoices</div>
<svg class="a" style="left:317px;top:733px" width="14" height="12" viewBox="0 0 14 12"><path d="M0.5 6 H13 M7.6 0.8 L12.8 6 L7.6 11.2" fill="none" stroke="#555" stroke-width="1.1"/></svg>
<div class="a" style="left:353px;top:720px;width:323px;height:60px;background:#f9fcfe;border:1px solid #e3e3e3;border-radius:5px"></div>
<div class="a" style="left:363.50px;top:732.00px;font-size:14px;line-height:14px;color:#1a2130;letter-spacing:0.013px;-webkit-text-stroke:0.35px #1a2130;">Online Sessions (Chart Dashboard)</div>
<div class="a" style="left:686px;top:720px;width:655px;height:60px;background:#fff;border:1px solid #e3e3e3;border-radius:5px"></div>
<div class="a" style="left:696.30px;top:732.00px;font-size:14px;line-height:14px;color:#1a2130;letter-spacing:-0.042px;-webkit-text-stroke:0.35px #1a2130;">Online Session Time Series Wise</div>
<svg class="a" style="left:1315px;top:733px" width="14" height="12" viewBox="0 0 14 12"><path d="M0.5 6 H13 M7.6 0.8 L12.8 6 L7.6 11.2" fill="none" stroke="#555" stroke-width="1.1"/></svg>
<div class="a" style="left:1357px;top:84px;width:9px;height:684px;background:#f1f1f1"></div>
<div class="a" style="left:1358.3px;top:80px;width:6.6px;height:234px;background:#a9a9a9;border-radius:3px"></div>
<div class="a" style="left:0;top:758px;width:1366px;height:10px;background:#f1f1f1"></div>
<svg class="a" style="left:0;top:740px" width="1366" height="28" viewBox="0 740 1366 28"><path d="M2 762.8 L7 759.8 V765.8 Z" fill="#a3a3a3"/><path d="M1354.6 762.8 L1349.6 759.8 V765.8 Z" fill="#a3a3a3"/><path d="M1358 750.2 H1365 L1361.5 755.4 Z" fill="#a3a3a3"/></svg>
</body></html>
